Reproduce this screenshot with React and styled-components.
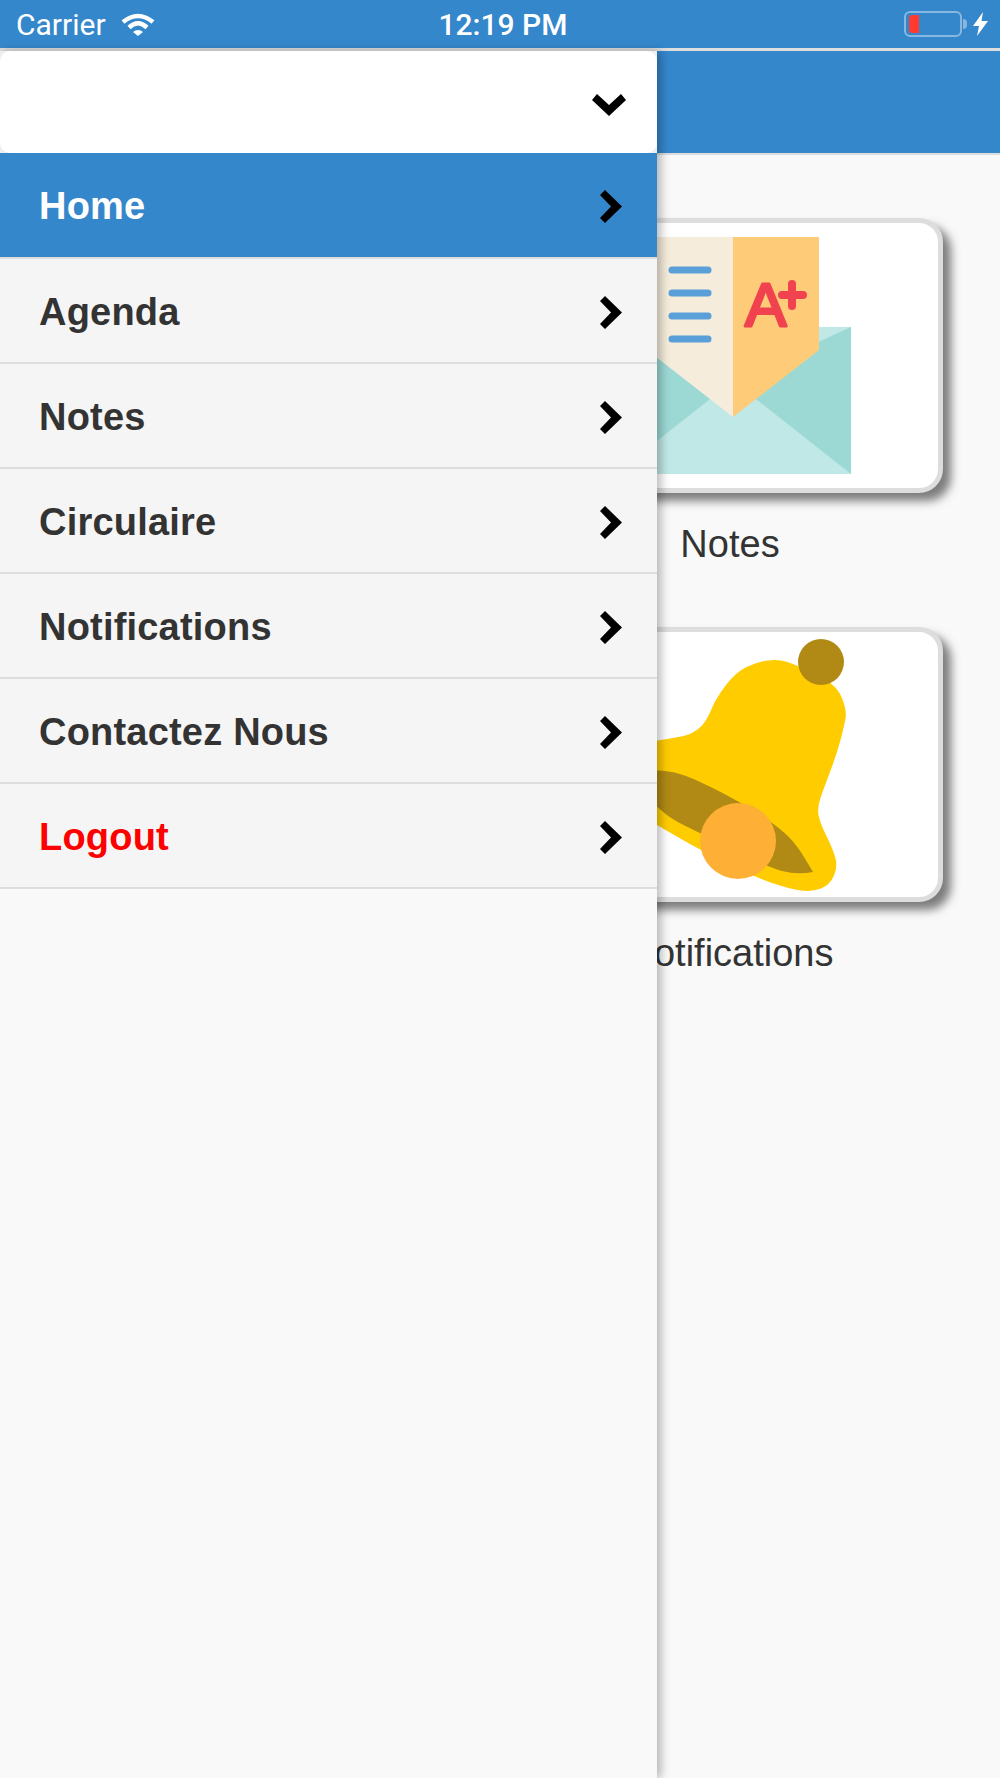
import React from "react";
import styled, { createGlobalStyle } from "styled-components";

const BLUE = "#3587cc";
const LINE = "#dddddd";

const GlobalStyle = createGlobalStyle`
  html, body {
    margin: 0;
    padding: 0;
    background: #f9f9f9;
    font-family: "Liberation Sans", Arial, sans-serif;
  }
`;

const Screen = styled.div`
  position: relative;
  width: 1000px;
  height: 1778px;
  overflow: hidden;
  display: flex;
  flex-direction: column;
  background: #f9f9f9;
`;

const StatusBar = styled.div`
  height: 48px;
  box-sizing: content-box;
  border-bottom: 3px solid ${LINE};
  background: ${BLUE};
  color: #fff;
  font-family: Roboto, "Liberation Sans", sans-serif;
  font-size: 30px;
  display: grid;
  grid-template-columns: 1fr auto 1fr;
  align-items: center;
  padding: 0 12px 0 16px;
`;

const StatusLeft = styled.div`
  display: flex;
  align-items: center;
  gap: 15px;
`;

const Clock = styled.span`
  font-weight: 500;
  margin-left: 2px;
`;

const StatusRight = styled.div`
  display: flex;
  align-items: center;
  justify-content: flex-end;
  gap: 2px;
`;

const Battery = styled.div`
  width: 58px;
  height: 26px;
  box-sizing: border-box;
  border: 2px solid #85b7e0;
  border-radius: 6px;
  padding: 2px 3px;
  position: relative;
  margin-right: 9px;
  &::before {
    content: "";
    display: block;
    width: 10px;
    height: 100%;
    background: #ff3b30;
    border-radius: 3px 0 0 3px;
  }
  &::after {
    content: "";
    position: absolute;
    right: -7px;
    top: 6px;
    width: 4px;
    height: 10px;
    background: #85b7e0;
    border-radius: 0 4px 4px 0;
  }
`;

const AppBar = styled.div`
  height: 102px;
  background: ${BLUE};
  border-bottom: 2px solid ${LINE};
`;

const Content = styled.div`
  flex: 1;
  padding: 63px 0 0 517px;
`;

const Tile = styled.div`
  width: 426px;
  display: flex;
  flex-direction: column;
  align-items: center;
  margin-bottom: 56px;
`;

const Card = styled.div`
  width: 100%;
  height: 275px;
  box-sizing: border-box;
  background: #fff;
  border: 5px solid ${LINE};
  border-radius: 24px;
  box-shadow: 8px 8px 10px rgba(0, 0, 0, 0.5);
  overflow: hidden;
  svg {
    display: block;
    width: 416px;
    height: 265px;
  }
`;

const TileLabel = styled.div`
  margin-top: 24px;
  font-size: 38px;
  line-height: 54px;
  color: #333;
`;

const Drawer = styled.nav`
  position: absolute;
  top: 51px;
  left: 0;
  bottom: 0;
  width: 657px;
  background: #f9f9f9;
  box-shadow: 4px 0 9px rgba(0, 0, 0, 0.28);
`;

const DrawerHead = styled.div`
  height: 102px;
  background: #eeeeee;
`;

const DrawerHeadInner = styled.div`
  height: 100%;
  background: #fff;
  border-radius: 10px;
  display: flex;
  align-items: center;
  justify-content: flex-end;
  padding: 5px 31px 0 0;
  box-sizing: border-box;
`;

const MenuRow = styled.div`
  height: ${(p) => (p.$active ? "106px" : "105px")};
  box-sizing: border-box;
  display: flex;
  align-items: center;
  justify-content: space-between;
  padding: 3px 35px 0 39px;
  background: ${(p) => (p.$active ? BLUE : "#f5f5f5")};
  border-bottom: 2px solid ${LINE};
  font-size: 38px;
  font-weight: 700;
  letter-spacing: 0.2px;
  color: ${(p) => (p.$active ? "#fff" : p.$danger ? "#ff0000" : "#333")};
`;

const ChevronRight = () => (
  <svg width="22" height="33" viewBox="0 0 22 33">
    <path d="M0 5 L5 0 L22 16.5 L5 33 L0 28 L11 16.5 Z" fill="#000" />
  </svg>
);

const ChevronDown = () => (
  <svg width="34" height="22" viewBox="0 0 34 22">
    <path d="M0 6 L5 0 L17 11 L29 0 L34 6 L17 22 Z" fill="#000" />
  </svg>
);

const Wifi = () => (
  <svg width="34" height="23" viewBox="0 0 34 23" fill="none">
    <path d="M2 9 Q17 -3 32 9" stroke="#fff" strokeWidth="4.5" />
    <path d="M8 14.5 Q17 6 26 14.5" stroke="#fff" strokeWidth="4.5" />
    <path d="M12 19 Q17 15 22 19 L17 23 Z" fill="#fff" />
  </svg>
);

const Bolt = () => (
  <svg width="15" height="24" viewBox="0 0 15 24">
    <path d="M10 0 L0 14 L6 14 L4 24 L15 9 L8.5 9 Z" fill="#fff" />
  </svg>
);

// curve through the midpoints of a list of points
const smooth = (pts) => {
  let d = `M${pts[0][0]} ${pts[0][1]}`;
  for (let i = 1; i < pts.length - 1; i++) {
    const mx = (pts[i][0] + pts[i + 1][0]) / 2;
    const my = (pts[i][1] + pts[i + 1][1]) / 2;
    d += ` Q${pts[i][0]} ${pts[i][1]} ${mx} ${my}`;
  }
  const last = pts[pts.length - 1];
  return `${d} L${last[0]} ${last[1]}`;
};

const bellOutline = [
  [640, 743], [683, 737], [697, 731], [707, 720], [716, 698], [736, 672], [757, 662], [778, 659],
  [797, 665], [836, 684], [847, 710], [844, 727], [837, 753], [827, 780], [817, 807], [820, 823],
  [832, 847], [838, 866], [830, 885], [812, 892], [790, 889], [757, 878], [700, 850], [657, 825], [640, 815],
];

const bellInner = [
  [640, 770], [657, 770], [680, 773], [707, 785], [740, 802], [773, 823], [795, 842], [813, 872],
];

const bellInnerLow = [
  [813, 872], [797, 875], [767, 867], [700, 833], [673, 820], [657, 807], [640, 790],
];

// coordinates below are page pixels, the viewBox is the inside of the card
const NotesArt = () => (
  <svg viewBox="522 223 416 265">
    <rect x="615" y="327" width="236" height="147" fill="#c0e8e6" />
    <path d="M851 327 V474 L733 381 Z" fill="#9cd9d5" />
    <path d="M615 327 V474 L733 381 Z" fill="#9cd9d5" />
    <path d="M647 237 H733 V417 L647 350 Z" fill="#f5ecdb" />
    <path d="M733 237 H819 V350 L733 417 Z" fill="#fecb78" />
    {[270, 293, 316, 339].map((y) => (
      <line key={y} x1="672" x2="708" y1={y} y2={y} stroke="#5b9fd8" strokeWidth="7" strokeLinecap="round" />
    ))}
    <text
      x="745"
      y="326"
      fontFamily="Liberation Sans"
      fontSize="62"
      fill="#f0424f"
      stroke="#f0424f"
      strokeWidth="3"
      strokeLinejoin="round"
    >
      A
    </text>
    <path d="M782 295 H803 M792 284 V306" stroke="#f0424f" strokeWidth="8" strokeLinecap="round" />
  </svg>
);

const BellArt = () => (
  <svg viewBox="522 632 416 265">
    <path d={smooth(bellOutline) + " Z"} fill="#ffcc00" />
    <path d={smooth(bellInner) + " " + smooth(bellInnerLow).replace("M", "L") + " Z"} fill="#b08a14" />
    <circle cx="738" cy="841" r="38" fill="#fdb035" />
    <circle cx="821" cy="662" r="23" fill="#b08a14" />
  </svg>
);

const menu = ["Home", "Agenda", "Notes", "Circulaire", "Notifications", "Contactez Nous", "Logout"];

export default function App() {
  return (
    <Screen>
      <GlobalStyle />
      <StatusBar>
        <StatusLeft>
          Carrier
          <Wifi />
        </StatusLeft>
        <Clock>12:19 PM</Clock>
        <StatusRight>
          <Battery />
          <Bolt />
        </StatusRight>
      </StatusBar>
      <AppBar />
      <Content>
        <Tile>
          <Card>
            <NotesArt />
          </Card>
          <TileLabel>Notes</TileLabel>
        </Tile>
        <Tile>
          <Card>
            <BellArt />
          </Card>
          <TileLabel>Notifications</TileLabel>
        </Tile>
      </Content>
      <Drawer>
        <DrawerHead>
          <DrawerHeadInner>
            <ChevronDown />
          </DrawerHeadInner>
        </DrawerHead>
        {menu.map((item) => (
          <MenuRow key={item} $active={item === "Home"} $danger={item === "Logout"}>
            {item}
            <ChevronRight />
          </MenuRow>
        ))}
      </Drawer>
    </Screen>
  );
}
